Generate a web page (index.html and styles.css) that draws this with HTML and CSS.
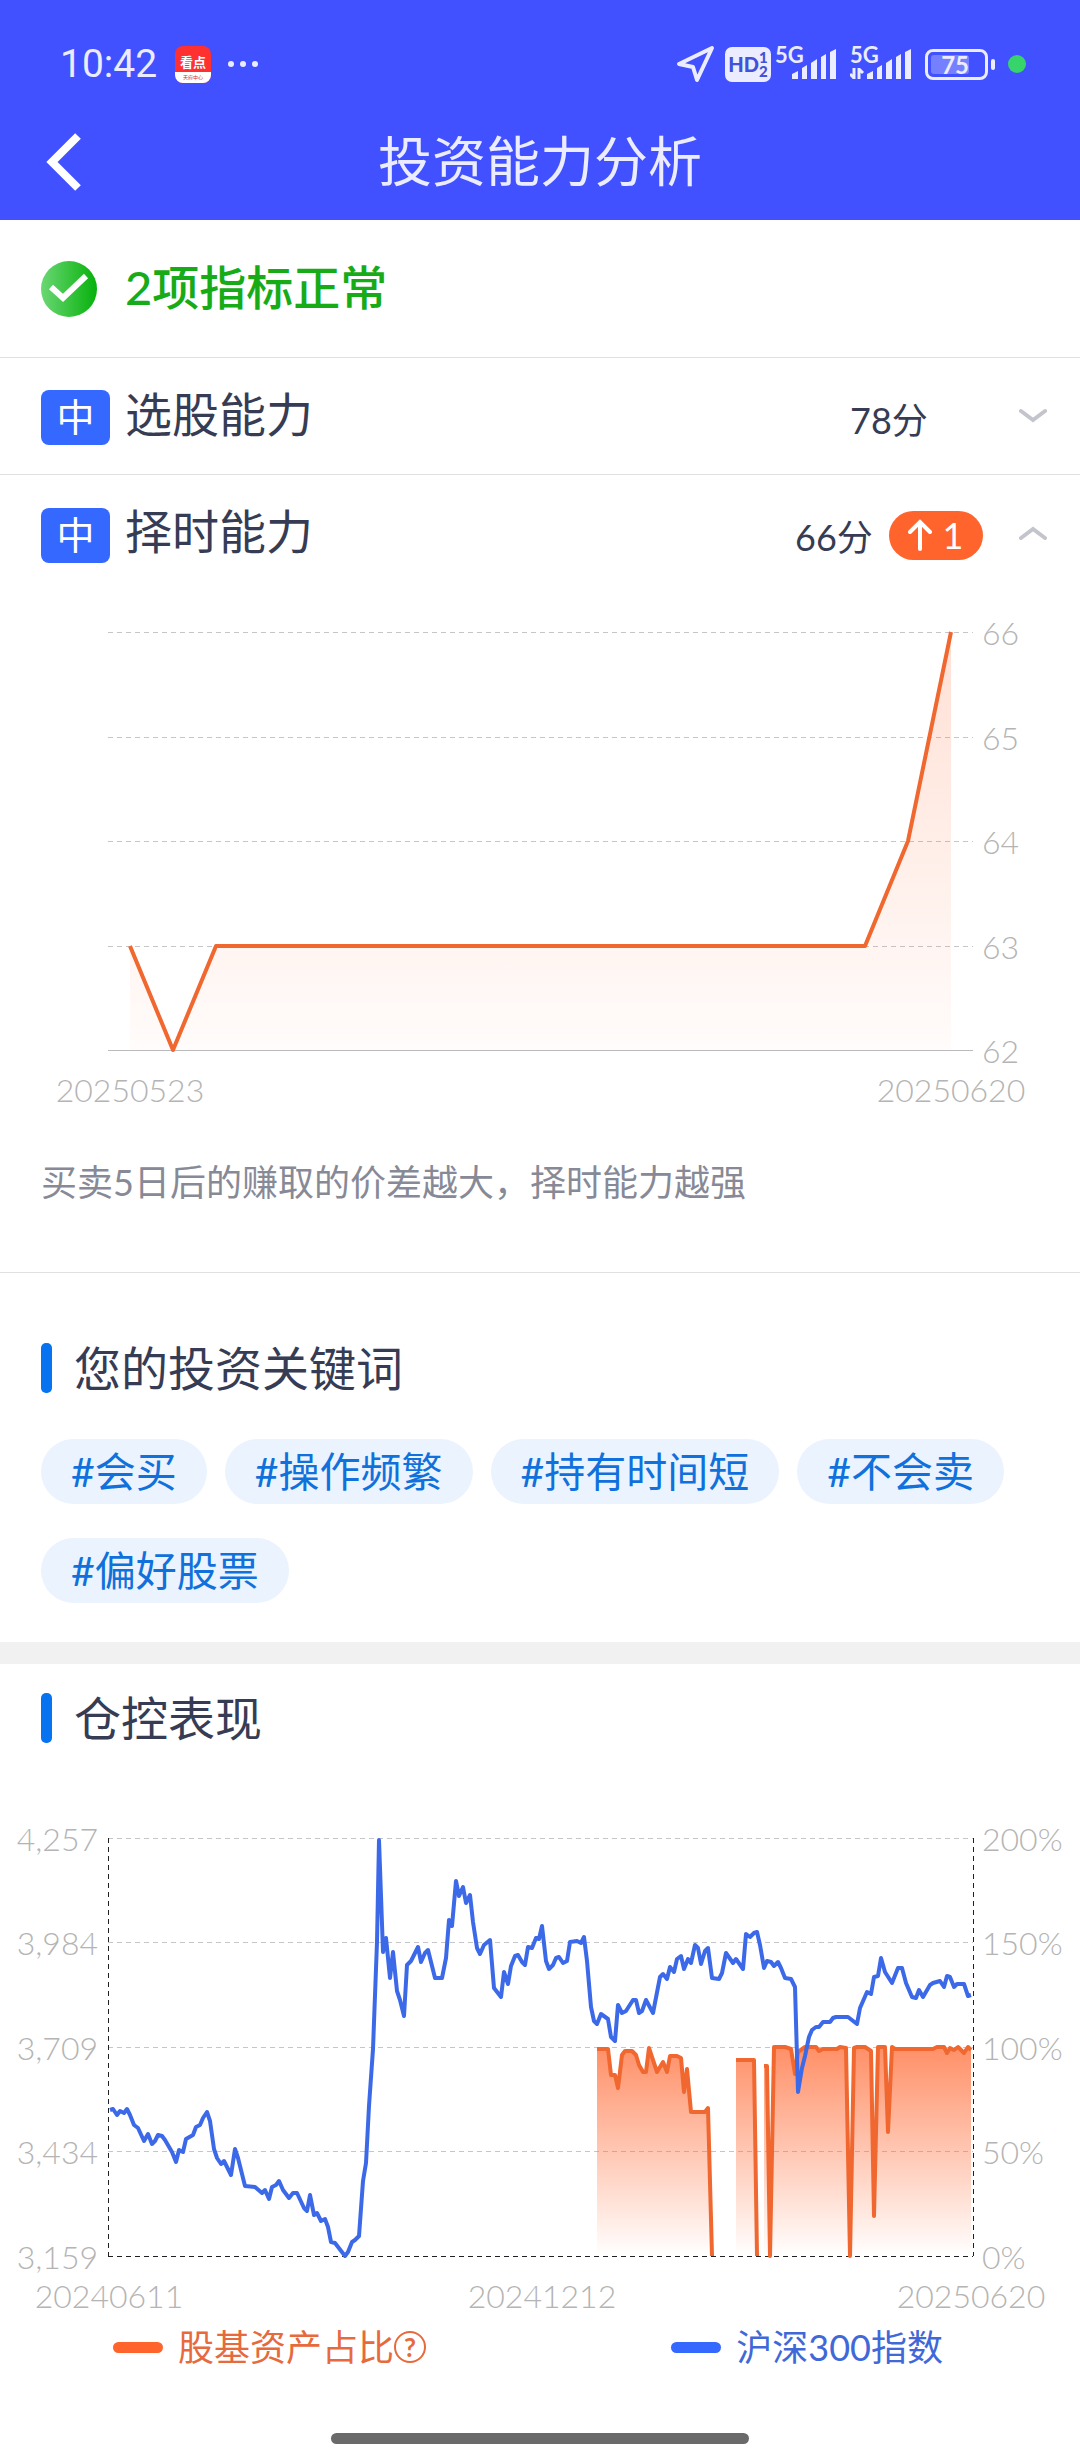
FILE: index.html
```html
<!DOCTYPE html>
<html lang="zh-CN">

<head>
    <meta charset="utf-8">
    <meta name="viewport" content="width=device-width, initial-scale=1">
    <title>投资能力分析</title>
    <link rel="stylesheet" href="styles.css">
</head>

<body>

    <header>
        <div class="status">
            <span class="time">10:42</span>
            <span class="app-icon">
                <span class="app-name">看点</span>
                <span class="app-sub">天府中心</span>
            </span>
            <svg class="dots" width="32" height="8" viewBox="0 0 32 8" fill="#ebecff">
                <circle cx="4" cy="4" r="3" />
                <circle cx="16" cy="4" r="3" />
                <circle cx="28" cy="4" r="3" />
            </svg>

            <div class="status-right">
                <svg width="40" height="40" viewBox="0 0 40 40">
                    <path d="M3 20 L36 4 L21 36 L17 23 Z" fill="none" stroke="#ebecff" stroke-width="4" stroke-linejoin="round" />
                </svg>
                <span class="hd">HD<span class="hd-sim"><b>1</b><b>2</b></span></span>
                <span class="signal">
                    <span class="net">5G</span>
                    <svg width="62" height="36" viewBox="0 0 62 36" fill="#ebecff">
                        <path d="M17 33v-5l6-3v8zM27 33V22l5-3v14zM36 33V17l6-4v20zM46 33V11l5-3v25zM55 33V6l6-3v30z" />
                    </svg>
                </span>
                <span class="signal">
                    <span class="net">5G</span>
                    <svg width="62" height="36" viewBox="0 0 62 36" fill="#ebecff">
                        <path d="M17 33v-5l6-3v8zM27 33V22l5-3v14zM36 33V17l6-4v20zM46 33V11l5-3v25zM55 33V6l6-3v30z" />
                        <path d="M4 22v11M9 33V22M4 32l-4-4M9 23l4 4" fill="none" stroke="#ebecff" stroke-width="3" />
                    </svg>
                </span>
                <span class="battery"><span class="battery-level">75</span></span>
                <span class="mic-dot"></span>
            </div>
        </div>

        <div class="title-bar">
            <button type="button" class="back" aria-label="返回">
                <svg width="36" height="60" viewBox="0 0 36 60">
                    <path d="M32 4 L6 30 L32 56" fill="none" stroke="#fff" stroke-width="8" />
                </svg>
            </button>
            <h1>投资能力分析</h1>
        </div>
    </header>

    <main>
        <div class="summary">
            <svg width="56" height="56" viewBox="0 0 56 56">
                <defs>
                    <linearGradient id="green" x1="0" y1="0" x2="1" y2="0">
                        <stop offset="0" stop-color="#6bd774" />
                        <stop offset="1" stop-color="#06b10b" />
                    </linearGradient>
                </defs>
                <circle cx="28" cy="28" r="28" fill="url(#green)" />
                <path d="M10 26 L22 37 L45 15" fill="none" stroke="#fff" stroke-width="6" />
            </svg>
            <span class="summary-text">2项指标正常</span>
        </div>

        <button type="button" class="ability" aria-expanded="false">
            <span class="level">中</span>
            <span class="name">选股能力</span>
            <span class="score">78分</span>
            <svg class="arrow" width="28" height="16" viewBox="0 0 28 16">
                <path d="M2 3 L14 12 L26 3" />
            </svg>
        </button>

        <button type="button" class="ability" aria-expanded="true">
            <span class="level">中</span>
            <span class="name">择时能力</span>
            <span class="score">66分
                <span class="change">
                    <svg width="24" height="32" viewBox="0 0 24 32">
                        <path d="M12 30 V3 M2 13 L12 3 L22 13" />
                    </svg>1
                </span>
            </span>
            <svg class="arrow" width="28" height="16" viewBox="0 0 28 16">
                <path d="M2 13 L14 4 L26 13" />
            </svg>
        </button>

        <!-- ability trend, one point per trading day -->
        <svg class="chart" viewBox="0 0 1080 520" role="img" aria-label="择时能力走势">
            <defs>
                <linearGradient id="trendFill" gradientUnits="userSpaceOnUse" x1="0" y1="40" x2="0" y2="458">
                    <stop offset="0" stop-color="#ff642c" stop-opacity=".2" />
                    <stop offset="1" stop-color="#ff642c" stop-opacity=".02" />
                </linearGradient>
            </defs>
            <path class="grid" d="M108 40.5H973M108 145.5H973M108 249.5H973M108 354.5H973" />
            <path class="base" d="M108 458.5H973" />
            <path fill="url(#trendFill)" d="M130 354 L173 458 L216 354 H865 L908 249 L951 40 V458 H130 Z" />
            <path class="line orange" d="M130 354 L173 458 L216 354 H865 L908 249 L951 40" />
            <g class="axis">
                <text x="982" y="53">66</text>
                <text x="982" y="158">65</text>
                <text x="982" y="262">64</text>
                <text x="982" y="367">63</text>
                <text x="982" y="471">62</text>
                <text x="130" y="510" text-anchor="middle">20250523</text>
                <text x="951" y="510" text-anchor="middle">20250620</text>
            </g>
        </svg>

        <p class="note">买卖5日后的赚取的价差越大，择时能力越强</p>

        <section class="keywords">
            <h2>您的投资关键词</h2>
            <ul>
                <li>#会买</li>
                <li>#操作频繁</li>
                <li>#持有时间短</li>
                <li>#不会卖</li>
                <li>#偏好股票</li>
            </ul>
        </section>

        <section class="position">
            <h2>仓控表现</h2>

            <svg class="chart" viewBox="0 0 1080 500" role="img" aria-label="股基资产占比与沪深300指数">
                <defs>
                    <linearGradient id="ratioFill" gradientUnits="userSpaceOnUse" x1="0" y1="247" x2="0" y2="456">
                        <stop offset="0" stop-color="#ff642c" stop-opacity=".72" />
                        <stop offset="1" stop-color="#ff642c" stop-opacity="0" />
                    </linearGradient>
                </defs>
                <path class="grid" d="M108 18.5H973M108 122.5H973M108 227.5H973M108 331.5H973" />
                <path class="frame" d="M108.5 18V436M108 436.5H973M973.5 18V436" />

                <g transform="translate(0 -20)">
                    <path fill="url(#ratioFill)" d="M597 249 608 249 611 275 615 275 618 288 622 255 625 251 632 251 636 255 639 265 643 272 646 272 649 248 657 272 663 262 667 272 670 256 677 256 681 258 684 292 687 269 691 312 705 312 708 308 712 456 597 456Z
                        M736 260 754 260 757 456 736 456Z
                        M764 266 767 266 770 456 774 247 785 247 791 249 795 274 798 252 805 247 816 247 819 251 823 249 837 249 840 247 846 248 850 456 854 248 857 247 865 247 871 251 874 416 878 247 885 247 888 332 892 247 895 249 933 249 937 247 944 247 947 253 950 248 954 250 958 247 964 253 968 247 971 250 971 456 764 456Z" />
                    <path class="line orange" d="M597 249 608 249 611 275 615 275 618 288 622 255 625 251 632 251 636 255 639 265 643 272 646 272 649 248 657 272 663 262 667 272 670 256 677 256 681 258 684 292 687 269 691 312 705 312 708 308 712 456
                        M736 260 754 260 757 456
                        M764 266 767 266 770 456 774 247 785 247 791 249 795 274 798 252 805 247 816 247 819 251 823 249 837 249 840 247 846 248 850 456 854 248 857 247 865 247 871 251 874 416 878 247 885 247 888 332 892 247 895 249 933 249 937 247 944 247 947 253 950 248 954 250 958 247 964 253 968 247 971 250" />
                    <path class="line blue" d="M110 310 113 309 117 315 120 311 124 313 127 309 130 315 134 325 138 328 144 341 148 334 152 344 155 341 158 335 162 336 165 340 172 352 176 362 179 350 183 352 186 339 193 335 196 327 200 325 203 318 207 312 210 321 214 349 217 358 221 364 224 361 231 375 235 349 238 358 245 386 255 387 262 393 265 390 269 399 272 387 276 385 279 381 283 390 289 398 293 393 297 393 304 408 307 411 310 395 314 415 317 413 321 421 325 419 328 427 331 442 335 443 345 456 348 452 352 442 355 440 359 436 363 381 366 363 369 306 373 249 377 142 379 40 383 152 386 138 390 178 393 152 397 191 400 200 404 216 407 165
                        411 161 418 147 421 162 425 153 428 150 435 178 442 178 446 158 449 120 452 126 456 81 459 96 463 87 466 103 470 95 473 122 477 148 480 154 484 145 490 140 494 188 501 197 504 172 508 184 511 166 515 156 518 155 522 162 525 165 528 147 532 148 536 138 539 139 542 126 546 161 549 169 553 165 556 158 559 157 563 163 567 161 570 142 577 141 581 143 584 137 587 161 591 207 594 221 597 224 601 214 608 219 611 237 615 241 618 205 622 213 626 211 633 200 636 200 639 213 642 211 646 200 653 213 660 177
                        663 174 667 179 670 167 674 172 677 159 681 156 684 169 688 159 691 163 695 145 698 148 701 164 705 151 708 148 712 178 719 179 722 173 726 153 733 163 736 159 743 169 746 134 750 137 754 133 757 132 760 145 764 168 767 161 771 162 774 166 778 162 781 168 785 178 791 179 795 187 798 292 802 268 805 256 809 237 812 230 816 227 819 227 823 222 830 222 833 218
                        836 217 848 217 857 224 860 208 867 192 871 194 874 177 878 176 881 158 885 172 892 183 898 168 902 168 906 183 912 197 916 198 919 190 923 197 930 185 933 183 940 181 944 187 947 176 950 177 954 187 957 184 964 184 968 196 971 195" />
                </g>

                <g class="axis" text-anchor="end">
                    <text x="98" y="31">4,257</text>
                    <text x="98" y="135">3,984</text>
                    <text x="98" y="240">3,709</text>
                    <text x="98" y="344">3,434</text>
                    <text x="98" y="449">3,159</text>
                </g>
                <g class="axis">
                    <text x="982" y="31">200%</text>
                    <text x="982" y="135">150%</text>
                    <text x="982" y="240">100%</text>
                    <text x="982" y="344">50%</text>
                    <text x="982" y="449">0%</text>
                </g>
                <g class="axis" text-anchor="middle">
                    <text x="109" y="488">20240611</text>
                    <text x="542" y="488">20241212</text>
                    <text x="971" y="488">20250620</text>
                </g>
            </svg>

            <div class="legend">
                <span class="orange">股基资产占比<button type="button" class="help" aria-label="说明">?</button></span>
                <span class="blue">沪深300指数</span>
            </div>
        </section>
    </main>

    <div class="home-bar"></div>

</body>

</html>
```

FILE: styles.css
```css
* {
    box-sizing: border-box;
}

body {
    margin: 0;
    background: #fff;
    color: #363c54;
    font-family: Lato, "Noto Sans CJK SC", sans-serif;
    font-size: 36px;
}

h1,
h2,
p,
ul {
    margin: 0;
    padding: 0;
    font-weight: normal;
}

button {
    border: none;
    background: none;
    padding: 0;
    color: inherit;
    font: inherit;
    cursor: pointer;
}

svg {
    display: block;
    flex: none;
}

/* header */

header {
    background: #4151ff;
    color: #ebecff;
    padding-top: 40px;
}

.status {
    display: flex;
    align-items: center;
    height: 48px;
    padding: 0 54px 0 60px;
}

.time {
    font-family: Roboto, sans-serif;
    font-size: 39px;
}

.app-icon {
    display: flex;
    flex-direction: column;
    width: 36px;
    height: 37px;
    margin: 0 16px 0 18px;
    border-radius: 8px;
    overflow: hidden;
    background: #ff3030;
    text-align: center;
}

.app-name {
    height: 26px;
    font-size: 13px;
    font-weight: bold;
    line-height: 32px;
    color: #fff;
}

.app-sub {
    height: 11px;
    background: #fff;
    color: #d03030;
    font-size: 5px;
    line-height: 11px;
}

.status-right {
    display: flex;
    align-items: center;
    margin-left: auto;
}

.hd {
    display: flex;
    align-items: center;
    justify-content: center;
    width: 46px;
    height: 35px;
    margin: 0 4px 0 9px;
    border-radius: 7px;
    background: #ebecff;
    color: #4151d8;
    font-size: 20px;
    font-weight: 900;
}

.hd-sim {
    display: flex;
    flex-direction: column;
    font-size: 15px;
    line-height: 14px;
}

.signal {
    position: relative;
    margin-right: 13px;
}

.net {
    position: absolute;
    top: 0;
    left: 0;
    font-size: 22px;
    font-weight: bold;
    line-height: 18px;
}

.battery {
    position: relative;
    width: 63px;
    height: 31px;
    padding: 3px;
    margin-right: 20px;
    border: 3px solid #ebecff;
    border-radius: 8px;
}

.battery::after {
    content: "";
    position: absolute;
    top: 7px;
    right: -10px;
    width: 4px;
    height: 11px;
    border-radius: 2px;
    background: #ebecff;
}

.battery-level {
    display: block;
    width: 38px;
    height: 19px;
    border-radius: 3px;
    background: #7480ff;
    font-size: 24px;
    font-weight: bold;
    line-height: 19px;
    text-align: right;
}

.mic-dot {
    width: 18px;
    height: 18px;
    border-radius: 50%;
    background: #37d46b;
}

.title-bar {
    display: grid;
    grid-template-columns: 82px 1fr 82px;
    align-items: center;
    height: 132px;
    padding-bottom: 0;
}

.back {
    justify-self: end;
    margin-top: 16px;
}

h1 {
    margin-top: 16px;
    font-size: 54px;
    line-height: 80px;
    text-align: center;
}

/* ability list */

.summary {
    display: flex;
    align-items: center;
    gap: 28px;
    height: 138px;
    padding: 0 41px;
    border-bottom: 1px solid #e0e0e2;
}

.summary-text {
    padding-bottom: 4px;
    color: #17ab17;
    font-size: 47px;
    font-weight: 500;
    line-height: 60px;
}

.ability {
    display: flex;
    align-items: center;
    width: 100%;
    height: 117px;
    padding: 3px 33px 0 41px;
    text-align: left;
}

.ability[aria-expanded="false"] {
    border-bottom: 1px solid #e0e0e2;
}

.level {
    width: 69px;
    height: 55px;
    margin-right: 15px;
    border-radius: 8px;
    background: #3568ff;
    color: #fff;
    font-size: 38px;
    line-height: 53px;
    text-align: center;
}

.name {
    flex: 1;
    padding-bottom: 8px;
    font-size: 47px;
    line-height: 60px;
}

.score {
    display: flex;
    align-items: center;
    justify-content: center;
    gap: 16px;
    width: 200px;
    margin-right: 30px;
}

.change {
    display: flex;
    align-items: center;
    justify-content: center;
    gap: 10px;
    width: 94px;
    height: 49px;
    border-radius: 25px;
    background: #ff642c;
    color: #fff;
}

.change path {
    fill: none;
    stroke: #fff;
    stroke-width: 4;
    stroke-linecap: round;
}

.arrow {
    margin-bottom: 4px;
}

.arrow path {
    fill: none;
    stroke: #c4c5cc;
    stroke-width: 4;
    stroke-linecap: round;
}

/* charts */

.chart {
    width: 100%;
    height: auto;
}

.grid,
.frame {
    stroke: #c6c6c8;
    stroke-dasharray: 5 4;
}

.frame {
    stroke: #202024;
}

.base {
    stroke: #bbb;
}

.line {
    fill: none;
    stroke-width: 4;
    stroke-linejoin: round;
}

.line.orange {
    stroke: #f0672f;
}

.line.blue {
    stroke: #3c69e8;
}

.axis {
    fill: #b4b4b4;
    font-size: 32px;
    font-weight: 300;
}

.note {
    padding: 43px 41px 63px;
    color: #878a96;
    line-height: 54px;
    border-bottom: 1px solid #e0e0e2;
}

/* sections */

h2 {
    display: flex;
    align-items: center;
    gap: 22px;
    font-size: 47px;
    line-height: 60px;
}

h2::before {
    content: "";
    width: 11px;
    height: 50px;
    border-radius: 5px;
    background: #0873f0;
}

.keywords {
    padding: 65px 41px 39px;
    border-bottom: 22px solid #f1f1f1;
}

.keywords ul {
    display: flex;
    flex-wrap: wrap;
    gap: 34px 18px;
    margin-top: 41px;
    list-style: none;
}

.keywords li {
    padding: 0 30px;
    border-radius: 33px;
    background: #ebf3fe;
    color: #1070dc;
    font-size: 41px;
    line-height: 65px;
}

.position h2 {
    padding: 24px 41px 0;
}

.position .chart {
    margin-top: 72px;
}

.legend {
    display: flex;
    justify-content: space-between;
    padding: 0 137px 0 113px;
    line-height: 54px;
}

.legend > span {
    display: flex;
    align-items: center;
}

.legend > span::before {
    content: "";
    width: 50px;
    height: 11px;
    margin-right: 15px;
    border-radius: 6px;
    background: #ff642c;
}

.legend .orange {
    color: #e66a3c;
}

.legend .blue {
    color: #4068d8;
}

.legend > .blue::before {
    background: #3568ff;
}

.help {
    width: 32px;
    height: 32px;
    border: 2px solid #e66a3c;
    border-radius: 50%;
    font-size: 26px;
    font-weight: bold;
    line-height: 26px;
}

.home-bar {
    width: 418px;
    max-width: 60%;
    height: 11px;
    margin: 59px auto 16px;
    border-radius: 6px;
    background: #6a6a6a;
}
```
